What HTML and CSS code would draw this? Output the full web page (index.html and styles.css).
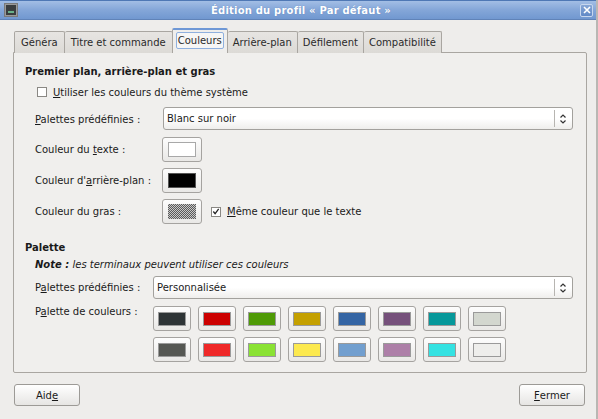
FILE: index.html
```html
<!DOCTYPE html>
<html lang="fr">
<head>
<meta charset="utf-8">
<title>Édition du profil</title>
<link rel="stylesheet" href="styles.css">
</head>
<body>
<div class="window">
  <div class="titlebar">
    <div class="app-icon"><span></span></div>
    <div class="title">Édition du profil « Par défaut »</div>
    <div class="close-btn">
      <svg width="10" height="10" viewBox="0 0 10 10"><path d="M2 2 L8 8 M8 2 L2 8" stroke="#ffffff" stroke-width="1.6" fill="none"/></svg>
    </div>
  </div>

  <div class="tabs">
    <div class="tab">Généra</div>
    <div class="tab">Titre et commande</div>
    <div class="tab active"><span class="focus">Couleurs</span></div>
    <div class="tab">Arrière-plan</div>
    <div class="tab">Défilement</div>
    <div class="tab">Compatibilité</div>
  </div>

  <div class="panel">
    <div class="section-title">Premier plan, arrière-plan et gras</div>
    <label class="check-row"><span class="checkbox"></span><span><u>U</u>tiliser les couleurs du thème système</span></label>

    <div class="form form-top">
      <div class="label"><u>P</u>alettes prédéfinies :</div>
      <div class="combo"><span class="combo-text">Blanc sur noir</span><span class="combo-sep"></span><span class="combo-arrows"><svg width="8" height="12" viewBox="0 0 8 12"><path d="M1.5 4.5 L4 2 L6.5 4.5 M1.5 7.5 L4 10 L6.5 7.5" stroke="#333" stroke-width="1.2" fill="none"/></svg></span></div>

      <div class="label">Couleur du <u>t</u>exte :</div>
      <div class="color-btn"><span class="swatch sw-white"></span></div>

      <div class="label">Couleur d'<u>a</u>rrière-plan :</div>
      <div class="color-btn"><span class="swatch sw-black"></span></div>

      <div class="label">Couleur du gras :</div>
      <div class="inline-row">
        <div class="color-btn"><span class="swatch sw-dither"></span></div>
        <label class="check-inline"><span class="checkbox checked"><svg width="9" height="9" viewBox="0 0 9 9"><path d="M1.5 4.5 L3.5 7 L7.5 1.5" stroke="#222" stroke-width="1.4" fill="none"/></svg></span><span><u>M</u>ême couleur que le texte</span></label>
      </div>
    </div>

    <div class="section-title second">Palette</div>
    <div class="note"><b>Note :</b> les terminaux peuvent utiliser ces couleurs</div>

    <div class="form form-bottom">
      <div class="label">P<u>a</u>lettes prédéfinies :</div>
      <div class="combo"><span class="combo-text">Personnalisée</span><span class="combo-sep"></span><span class="combo-arrows"><svg width="8" height="12" viewBox="0 0 8 12"><path d="M1.5 4.5 L4 2 L6.5 4.5 M1.5 7.5 L4 10 L6.5 7.5" stroke="#333" stroke-width="1.2" fill="none"/></svg></span></div>

      <div class="label label-top">P<u>a</u>lette de couleurs :</div>
      <div class="palette">
        <div class="pal-btn"><span class="pal-sw c1"></span></div>
        <div class="pal-btn"><span class="pal-sw c2"></span></div>
        <div class="pal-btn"><span class="pal-sw c3"></span></div>
        <div class="pal-btn"><span class="pal-sw c4"></span></div>
        <div class="pal-btn"><span class="pal-sw c5"></span></div>
        <div class="pal-btn"><span class="pal-sw c6"></span></div>
        <div class="pal-btn"><span class="pal-sw c7"></span></div>
        <div class="pal-btn"><span class="pal-sw c8"></span></div>
        <div class="pal-btn"><span class="pal-sw c9"></span></div>
        <div class="pal-btn"><span class="pal-sw c10"></span></div>
        <div class="pal-btn"><span class="pal-sw c11"></span></div>
        <div class="pal-btn"><span class="pal-sw c12"></span></div>
        <div class="pal-btn"><span class="pal-sw c13"></span></div>
        <div class="pal-btn"><span class="pal-sw c14"></span></div>
        <div class="pal-btn"><span class="pal-sw c15"></span></div>
        <div class="pal-btn"><span class="pal-sw c16"></span></div>
      </div>
    </div>
  </div>

  <div class="footer">
    <div class="button">Aid<u>e</u></div>
    <div class="button"><u>F</u>ermer</div>
  </div>
</div>
</body>
</html>
```

FILE: styles.css
```css
* { box-sizing: border-box; }
html, body { margin: 0; padding: 0; }
body {
  width: 598px;
  height: 419px;
  overflow: hidden;
  background: #edecea;
  font-family: "DejaVu Sans", sans-serif;
  font-size: 10px;
  color: #1a1a1a;
}
u { text-decoration: underline; text-underline-offset: 1px; }

.window {
  width: 598px;
  height: 419px;
  display: flex;
  flex-direction: column;
  background: #eeedeb;
  border-right: 2px solid #b9b7b3;
}

/* Title bar */
.titlebar {
  height: 20px;
  flex: none;
  display: flex;
  align-items: center;
  padding: 0 3px 0 4px;
  background: linear-gradient(#a3bee5, #84a6d8 50%, #7198d0);
  border-top: 1px solid #4f78b5;
  border-bottom: 1px solid #6083b8;
}
.app-icon {
  width: 14px;
  height: 14px;
  border: 1px solid #7a7a7a;
  background: #3a3d3f;
  display: flex;
  align-items: center;
  justify-content: center;
  box-shadow: inset 0 0 0 1px #9a9a9a;
}
.app-icon span {
  width: 6px;
  height: 2px;
  background: #8fb;
  opacity: 0.6;
  margin-top: 3px;
}
.title {
  flex: 1;
  text-align: center;
  color: #ffffff;
  font-weight: bold;
  font-size: 10px;
  letter-spacing: 0.2px;
  padding-left: 4px;
  text-shadow: 0 0 1px #5a7eb6;
}
.close-btn {
  width: 13px;
  height: 13px;
  border: 1px solid #c7d7ee;
  border-radius: 2px;
  background: linear-gradient(#86a6d6, #6189c6);
  display: flex;
  align-items: center;
  justify-content: center;
}

/* Tabs */
.tabs {
  display: flex;
  align-items: flex-end;
  height: 33px;
  padding-left: 14px;
  flex: none;
  position: relative;
  z-index: 1;
  margin-bottom: -1px;
}
.tab {
  height: 22px;
  padding: 0 5px;
  display: flex;
  align-items: center;
  background: linear-gradient(#e7e5e2, #dcdad6);
  border: 1px solid #a9a6a1;
  border-bottom: none;
  border-left: none;
  border-radius: 2px 2px 0 0;
  color: #2a2a2a;
}
.tab:first-child { border-left: 1px solid #a9a6a1; padding: 0 6px; }
.tab:nth-child(2) { padding: 0 6px; }
.tab.active {
  height: 25px;
  background: #efeeec;
  border: 1px solid #a9a6a1;
  border-top: 2px solid #6e98d6;
  border-bottom: none;
  padding: 0 3px;
  align-items: flex-start;
  padding-top: 2px;
  margin-left: -1px;
}
.tab.active + .tab { border-left: none; }
.focus {
  border: 1px solid #8fb0de;
  border-radius: 2px;
  padding: 2px 1px;
  background: #f6f6f5;
}

/* Panel */
.panel {
  margin-left: 13px;
  width: 574px;
  height: 321px;
  flex: none;
  border: 1px solid #a9a6a1;
  border-radius: 0 2px 2px 2px;
  background: #f0efed;
  padding: 12px 13px 0 11px;
  display: flex;
  flex-direction: column;
}
.section-title {
  font-weight: bold;
  height: 14px;
  line-height: 14px;
}
.section-title.second { margin-top: 17px; }
.check-row {
  display: flex;
  align-items: center;
  height: 14px;
  margin-top: 6px;
  padding-left: 12px;
  gap: 6px;
}
.checkbox {
  width: 10px;
  height: 10px;
  border: 1px solid #8a8884;
  background: #ffffff;
  display: inline-flex;
  align-items: center;
  justify-content: center;
  flex: none;
}
.checkbox.checked { border-color: #8a8884; }

.form {
  display: grid;
  align-items: center;
  padding-left: 10px;
}
.form-top {
  grid-template-columns: 127px 1fr;
  grid-auto-rows: auto;
  row-gap: 6px;
  margin-top: 8px;
}
.form-top .combo { margin-bottom: 1px; }
.form-bottom {
  grid-template-columns: 118px 1fr;
  row-gap: 7px;
  margin-top: 4px;
}
.label { white-space: nowrap; }
.label-top { align-self: start; padding-top: 0; }

.combo {
  height: 23px;
  border: 1px solid #a3a19d;
  border-radius: 3px;
  background: linear-gradient(#ffffff, #ffffff 50%, #efeeec);
  display: flex;
  align-items: center;
  padding-left: 3px;
  margin-left: 1px;
}
.form-bottom .combo { margin-left: 0; }
.combo-text { flex: 1; }
.combo-sep {
  width: 1px;
  height: 17px;
  background: #b7b5b1;
  margin-right: 4px;
}
.combo-arrows {
  width: 13px;
  display: flex;
  align-items: center;
}

.color-btn {
  width: 40px;
  height: 25px;
  border: 1px solid #a5a3a0;
  border-radius: 3px;
  background: linear-gradient(#fdfdfd, #e9e8e6);
  display: flex;
  align-items: center;
  justify-content: center;
}
.swatch {
  width: 28px;
  height: 15px;
  border: 1px solid #8d8d8d;
}
.sw-white { background: #ffffff; border-color: #a8a8a8; }
.sw-black { background: #000000; border-color: #555; }
.sw-dither {
  border: none;
  background-color: #9a9a9a;
  background-image: repeating-conic-gradient(#5a5a5a 0 25%, #c8c8c8 0 50%);
  background-size: 2px 2px;
}
.inline-row {
  display: flex;
  align-items: center;
  gap: 9px;
}
.check-inline {
  display: flex;
  align-items: center;
  gap: 6px;
}

.note {
  height: 14px;
  line-height: 14px;
  margin-top: 3px;
  padding-left: 10px;
  font-style: italic;
}

.palette {
  display: grid;
  grid-template-columns: repeat(8, 38px);
  column-gap: 7px;
  row-gap: 6px;
}
.pal-btn {
  width: 38px;
  height: 25px;
  border: 1px solid #a5a3a0;
  border-radius: 3px;
  background: linear-gradient(#fdfdfd, #e9e8e6);
  display: flex;
  align-items: center;
  justify-content: center;
}
.pal-sw {
  width: 28px;
  height: 14px;
  border: 1px solid #9a9a9a;
}
.c1 { background: #2e3436; }
.c2 { background: #cc0000; }
.c3 { background: #4e9a06; }
.c4 { background: #c4a000; }
.c5 { background: #3465a4; }
.c6 { background: #75507b; }
.c7 { background: #06989a; }
.c8 { background: #d3d7cf; }
.c9 { background: #555753; }
.c10 { background: #ef2929; }
.c11 { background: #8ae234; }
.c12 { background: #fce94f; }
.c13 { background: #729fcf; }
.c14 { background: #ad7fa8; }
.c15 { background: #34e2e2; }
.c16 { background: #eeeeec; }

/* Footer */
.footer {
  display: flex;
  justify-content: space-between;
  padding: 11px 11px 0 14px;
}
.button {
  width: 66px;
  height: 22px;
  border: 1px solid #9c9a96;
  border-radius: 3px;
  background: linear-gradient(#ffffff, #e6e5e3);
  display: flex;
  align-items: center;
  justify-content: center;
}
```
